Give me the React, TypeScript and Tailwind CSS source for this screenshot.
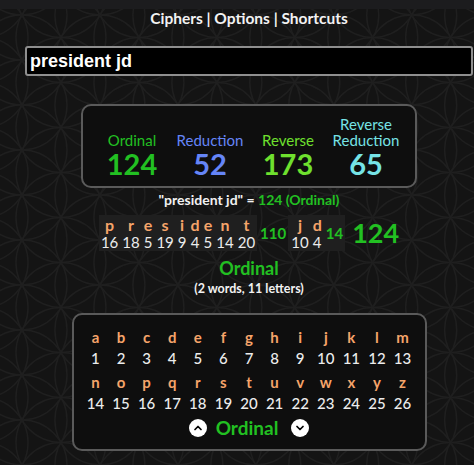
import React from 'react'
import { ChevronUp, ChevronDown } from 'lucide-react'

const ciphers = [
  { name: ['Ordinal'], value: 124, color: 'text-[#22c022]' },
  { name: ['Reduction'], value: 52, color: 'text-[#6585f7]' },
  { name: ['Reverse'], value: 173, color: 'text-[#6fe02e]' },
  { name: ['Reverse', 'Reduction'], value: 65, color: 'text-[#76e3e6]' },
]

const words = [
  { letters: 'president', total: 110 },
  { letters: 'jd', total: 14 },
]

const ord = (c: string) => c.charCodeAt(0) - 96
const alphabet = 'abcdefghijklmnopqrstuvwxyz'.split('')

function Pattern() {
  // flower-of-life background
  const R = 45
  const dx = (R * Math.sqrt(3)) / 2
  const circles: { x: number; y: number }[] = []
  for (let i = -2; i < 16; i++) {
    for (let j = -2; j < 14; j++) {
      circles.push({ x: 22 + i * dx, y: 15 + j * R + (Math.abs(i) % 2 ? R / 2 : 0) })
    }
  }
  return (
    <svg className="absolute inset-0" width="474" height="465">
      {circles.map((c, k) => (
        <circle key={k} cx={c.x} cy={c.y} r={R} fill="none" stroke="#1f1f1f" strokeWidth="1.5" />
      ))}
    </svg>
  )
}

function Letters({ word }: { word: string }) {
  return (
    <>
      {word.split('').map((l, i) => (
        <div key={i} className="flex flex-col items-center px-[2px]">
          <span className="text-[16px] leading-[18px] font-bold text-[#f5a46a]">{l}</span>
          <span className="text-[15px] leading-[16px] text-[#ececec]">{ord(l)}</span>
        </div>
      ))}
    </>
  )
}

export default function App() {
  return (
    <div className="relative w-full h-[465px] overflow-hidden bg-[#141414] font-['Lato','Noto_Sans',sans-serif]">
      <Pattern />
      <div className="absolute top-0 left-0 right-0 h-[9px] bg-[#1c1c1e]" />

      <div className="relative w-[498px] flex flex-col items-center">
        {/* Nav */}
        <div className="mt-[9px] h-[19px] leading-[19px] text-[15.5px] font-bold text-[#f2f2f2]">
          Ciphers | Options | Shortcuts
        </div>

        {/* Input */}
        <div className="mt-[18px] w-[448px] h-[30px] rounded-[3px] border-2 border-[#8f8f8f] bg-black flex items-center px-[3px]">
          <span className="text-[18px] font-bold text-white font-['Liberation_Sans',Arial,sans-serif]">president jd</span>
        </div>

        {/* Cipher totals */}
        <div className="mt-[28px] w-[336px] h-[84px] rounded-[10px] border-2 border-[#5a5a5a] bg-[#0e0e0e] flex justify-center items-end pb-[7px]">
          {ciphers.map(c => (
            <div key={c.name.join(' ')} className={`w-[78px] flex flex-col items-center ${c.color}`}>
              {c.name.map(n => (
                <div key={n} className="text-[15px] leading-[16px]">{n}</div>
              ))}
              <div className="mt-[1px] text-[29px] leading-[30px] font-bold">{c.value}</div>
            </div>
          ))}
        </div>

        {/* Summary */}
        <div className="mt-[3px] h-[18px] leading-[18px] text-[14px] font-bold text-[#f2f2f2]">
          "president jd" = <span className="text-[#22c022]">124 (Ordinal)</span>
        </div>

        {/* Breakdown */}
        <div className="mt-[6px] flex items-center">
          <div className="flex bg-[#1f1f1f] pt-[1px] pb-[1px]">
            <Letters word={words[0].letters} />
          </div>
          <div className="pl-[3px] pr-[2px] text-[15px] font-bold text-[#22c022]">{words[0].total}</div>
          <div className="flex items-center bg-[#1f1f1f] pt-[1px] pb-[1px] pl-[1px] pr-[2px]">
            <Letters word={words[1].letters} />
            <div className="pl-[2px] text-[15px] font-bold text-[#22c022]">{words[1].total}</div>
          </div>
          <div className="pl-[7px] text-[27px] leading-[30px] font-bold text-[#22c022]">124</div>
        </div>

        <div className="mt-[6px] h-[22px] leading-[22px] text-[18px] font-bold text-[#22c022]">Ordinal</div>
        <div className="mt-[2px] h-[16px] leading-[16px] text-[12.5px] font-bold text-[#f2f2f2]">(2 words, 11 letters)</div>

        {/* Alphabet chart */}
        <div className="mt-[16px] w-[355px] h-[138px] rounded-[10px] border-2 border-[#5a5a5a] bg-[#0e0e0e] flex flex-col items-center pt-[12px]">
          {[alphabet.slice(0, 13), alphabet.slice(13)].map((row, r) => (
            <div key={r} className={`grid grid-cols-[repeat(13,25.6px)] ${r === 1 ? 'mt-[4px]' : ''}`}>
              {row.map(l => (
                <span key={l} className="text-center text-[15px] leading-[20px] font-bold text-[#f5a46a]">{l}</span>
              ))}
              {row.map(l => (
                <span key={l + 'n'} className="mt-[1px] text-center text-[15px] leading-[20px] font-medium text-[#ececec]">{ord(l)}</span>
              ))}
            </div>
          ))}
          <div className="mt-[4px] flex items-center gap-[9px]">
            <div className="w-[18px] h-[18px] rounded-full bg-white flex items-center justify-center">
              <ChevronUp className="w-[12px] h-[12px] text-black" strokeWidth={3.5} />
            </div>
            <span className="text-[19px] leading-[22px] font-bold text-[#22c022] mr-[4px]">Ordinal</span>
            <div className="w-[18px] h-[18px] rounded-full bg-white flex items-center justify-center">
              <ChevronDown className="w-[12px] h-[12px] text-black" strokeWidth={3.5} />
            </div>
          </div>
        </div>
      </div>
    </div>
  )
}
